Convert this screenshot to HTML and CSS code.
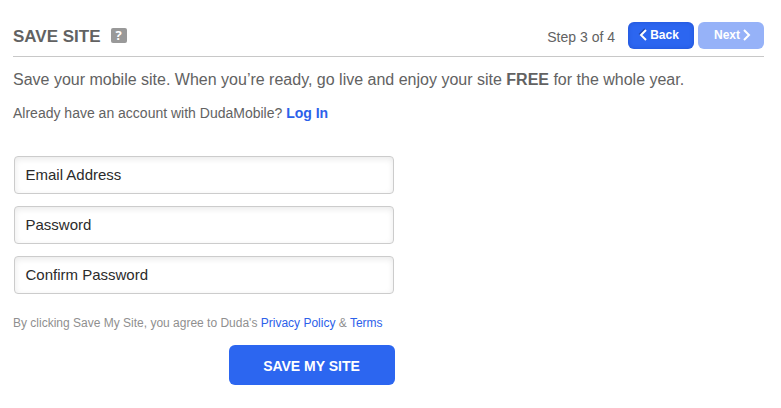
FILE: index.html
```html
<!DOCTYPE html>
<html lang="en">
<head>
<meta charset="utf-8">
<title>Save Site</title>
<link rel="stylesheet" href="styles.css">
</head>
<body>
<header class="bar">
  <h1 class="title">SAVE SITE</h1>
  <span class="help">?</span>
  <span class="step">Step 3 of 4</span>
  <button class="nav back"><svg width="8" height="12" viewBox="0 0 8 12"><path d="M7 1 2 6 7 11"/></svg><span>Back</span></button>
  <button class="nav next"><span>Next</span><svg width="8" height="12" viewBox="0 0 8 12"><path d="M1 1 6 6 1 11"/></svg></button>
</header>
<p class="lead">Save your mobile site. When you’re ready, go live and enjoy your site <b>FREE</b> for the whole year.</p>
<p class="login">Already have an account with DudaMobile? <a href="#">Log In</a></p>
<form class="form">
  <label class="field">Email Address</label>
  <label class="field">Password</label>
  <label class="field">Confirm Password</label>
  <p class="terms">By clicking Save My Site, you agree to Duda's <a href="#">Privacy Policy</a> &amp; <a href="#">Terms</a></p>
  <button class="save" type="button">SAVE MY SITE</button>
</form>
</body>
</html>
```
FILE: styles.css
```css
* { box-sizing: border-box; }
body { margin: 0; padding: 13px 17px 0 13px; background: #fff; color: #626262; font-family: "Liberation Sans", Arial, sans-serif; }
p, h1 { margin: 0; white-space: nowrap; }
a { color: #2c61ea; text-decoration: none; }
button { border: 0; font-family: inherit; color: #fff; font-weight: bold; }
.bar { display: flex; align-items: center; height: 44px; border-bottom: 1px solid #c8c8c8; }
.title { font-size: 17px; line-height: 20px; margin-top: 5px; }
.help { width: 16px; height: 15px; margin: 2px 0 0 10px; background: #999; color: #fff; border-radius: 2px; font: bold 13px/15px "Open Sans", sans-serif; text-align: center; }
.step { margin: 4px 13px 0 auto; font-size: 14px; }
.nav { display: flex; align-items: center; justify-content: center; gap: 3px; width: 66px; height: 27px; margin-top: 1px; padding: 0 3px 1px 0; border-radius: 6px; background: #2c66f0; font-size: 12px; }
.nav svg { fill: none; stroke: #fff; stroke-width: 2; overflow: visible; }
.back { padding-right: 4px; box-shadow: inset 0 0 4px rgba(10, 40, 150, .3); }
.back svg { filter: drop-shadow(-1px -1px 0 rgba(20, 40, 110, .5)); }
.next { margin-left: 4px; padding: 0 0 1px 3px; background: #96b2f8; }
.lead { margin-top: 13px; font-size: 16px; line-height: 20px; }
.login { margin-top: 14px; font-size: 14px; line-height: 18px; }
.login a { font-weight: bold; }
.form { width: 382px; margin-top: 34px; padding-left: 1px; }
.field { display: flex; align-items: center; width: 380px; height: 38px; margin-bottom: 12px; padding: 0 0 2px 10.5px; border: 1px solid #ccc; border-radius: 4px; box-shadow: inset 0 2px 6px #e9e9e9; color: #2b2b2b; font-size: 15px; }
.terms { margin: 21px 0 14px -1px; font-size: 12px; line-height: 16px; color: #8f8f8f; }
.save { display: block; width: 166px; height: 40px; margin-left: auto; padding: 2px 1px 0 0; border-radius: 6px; background: #2c66f0; font-size: 14px; }
```
